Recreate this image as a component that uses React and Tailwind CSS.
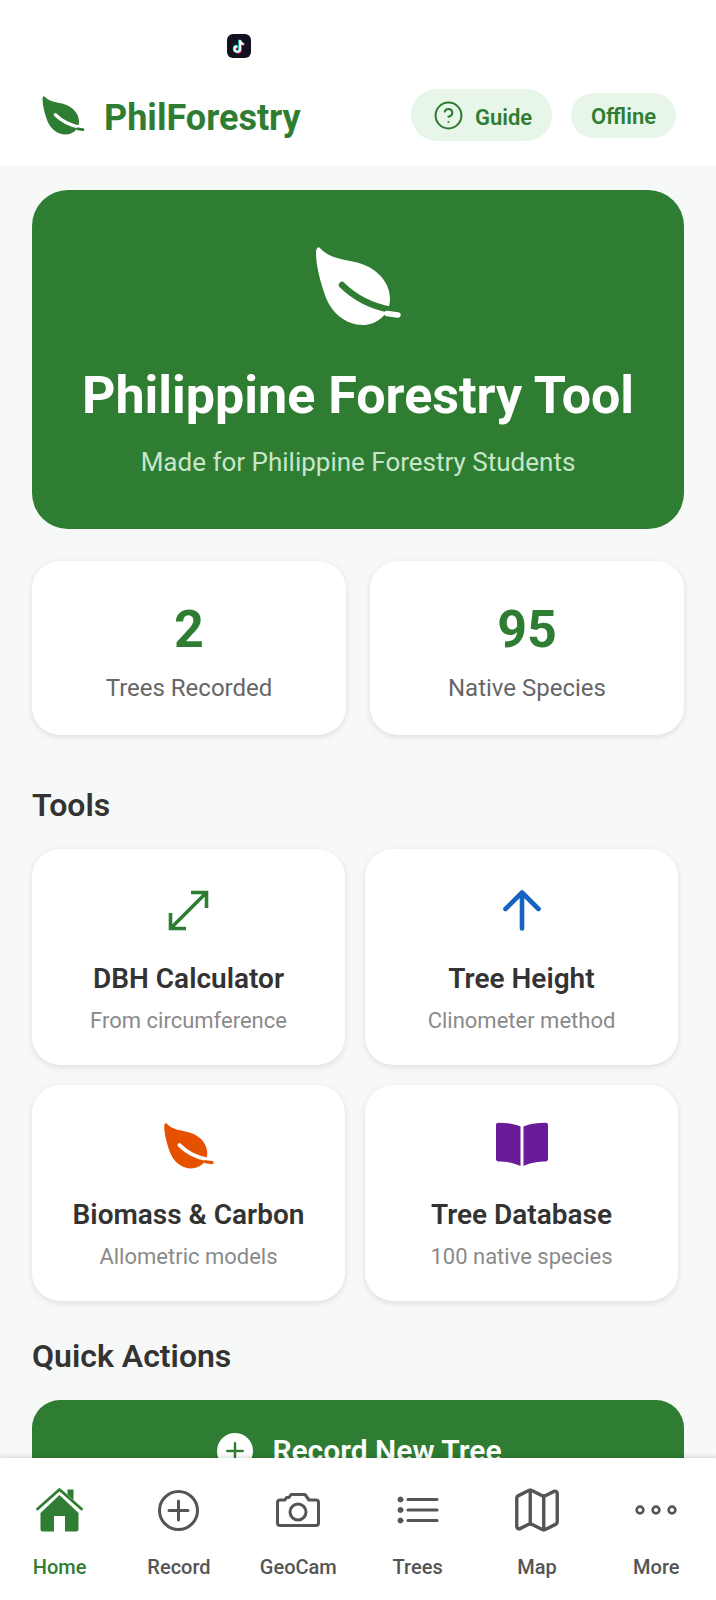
import React from "react";
import { CircleHelp, Map } from "lucide-react";

function Leaf({ className, fill, vein }) {
  return (
    <svg viewBox="0 0 85 79" className={className} aria-hidden="true">
      <path
        d="M4 1 C11 9 22 12 34 14 C56 17 74 32 74 52 C74 68 60 78 47 78 C30 78 15 66 9 48 C4 34 0 18 0 6 C0 2 1.5 -1 4 1 Z"
        fill={fill}
      />
      <path d="M26 38 C38 50 55 59 75 63" fill="none" stroke={vein} strokeWidth="6.5" strokeLinecap="round" />
      <path d="M71 66.5 L82 68" fill="none" stroke={fill} strokeWidth="5.5" strokeLinecap="round" />
    </svg>
  );
}

function TikTok() {
  const d = "M8.6 2v8.4a2.6 2.6 0 1 1-2.6-2.6M8.6 2.6c.4 2 1.6 3 3.4 3.2";
  return (
    <div className="flex h-6 w-6 items-center justify-center rounded-[6px] bg-[#11111f]">
      <svg viewBox="0 0 16 16" className="h-[17px] w-[17px]" fill="none" strokeWidth="2.2">
        <path d={d} stroke="#ff2d55" transform="translate(.6 .4)" />
        <path d={d} stroke="#25f4ee" transform="translate(-.6 -.4)" />
        <path d={d} stroke="#ffffff" strokeWidth="1.7" />
      </svg>
    </div>
  );
}

function Stat({ value, label }) {
  return (
    <div className="flex h-[174px] flex-1 flex-col items-center rounded-[28px] bg-white pt-[41px] shadow-[0_2px_6px_rgba(0,0,0,0.11)]">
      <div className="text-[52px] font-bold leading-[56px] text-[#2e7d32]">{value}</div>
      <div className="mt-[14px] text-[24px] leading-[32px] text-[#666666]">{label}</div>
    </div>
  );
}

function Tool({ icon, title, sub }) {
  return (
    <div className="flex h-[216px] flex-col items-center rounded-[28px] bg-white pt-[37px] shadow-[0_2px_6px_rgba(0,0,0,0.11)]">
      <div className="flex h-[48px] w-[60px] items-center justify-center">{icon}</div>
      <div className="mt-[27px] text-[28px] font-semibold leading-[36px] text-[#333333]">{title}</div>
      <div className="mt-[9px] text-[22px] leading-[30px] text-[#8a8a8a]">{sub}</div>
    </div>
  );
}

function NavItem({ icon, label, active }) {
  return (
    <div className="flex flex-1 flex-col items-center">
      <div className="flex h-[56px] items-center justify-center">{icon}</div>
      <div className={`mt-[15px] text-[20px] font-medium leading-[28px] ${active ? "text-[#2e7d32]" : "text-[#555555]"}`}>{label}</div>
    </div>
  );
}

export default function App() {
  return (
    <div className="flex h-[1600px] w-[716px] flex-col overflow-hidden bg-white font-['Roboto',sans-serif]">
      <header className="h-[166px] shrink-0 bg-white">
        <div className="h-[89px] pl-[227px] pt-[34px]">
          <TikTok />
        </div>
        <div className="flex items-center pl-[42px] pr-[40px]">
          <div className="flex h-[52px] items-center">
            <Leaf className="h-[39px] w-[43px]" fill="#2e7d32" vein="#ffffff" />
            <span className="ml-[19px] mt-[6px] text-[36px] font-bold leading-[44px] text-[#2e7d32]">PhilForestry</span>
          </div>
          <div className="ml-auto flex items-center gap-[19px]">
            <div className="flex h-[52px] w-[141px] items-center justify-center gap-[11px] rounded-full bg-[#e8f5e9] pl-[2px] text-[22px] font-semibold text-[#2e7d32]">
              <CircleHelp className="h-[31px] w-[31px]" strokeWidth={1.6} />
              <span className="mt-[4px]">Guide</span>
            </div>
            <div className="flex h-[45px] w-[105px] items-center justify-center rounded-full bg-[#e8f5e9] pt-[2px] text-[22px] font-semibold text-[#2e7d32]">
              Offline
            </div>
          </div>
        </div>
      </header>

      <main className="min-h-0 flex-1 overflow-hidden bg-[#f6f9f7] px-[32px] pt-[24px]">
        <section className="flex h-[339px] flex-col items-center rounded-[36px] bg-[#2e7d32] pt-[57px]">
          <Leaf className="h-[79px] w-[85px]" fill="#ffffff" vein="#2e7d32" />
          <h1 className="mt-[38px] text-[52px] font-bold leading-[64px] text-white">Philippine Forestry Tool</h1>
          <p className="mt-[17px] text-[26px] leading-[34px] text-[#c8e6c9]">Made for Philippine Forestry Students</p>
        </section>

        <section className="mt-[32px] flex gap-[24px]">
          <Stat value="2" label="Trees Recorded" />
          <Stat value="95" label="Native Species" />
        </section>

        <h2 className="mt-[50px] text-[32px] font-semibold leading-[40px] text-[#333333]">Tools</h2>

        <section className="mt-[24px] grid w-[646px] grid-cols-2 gap-x-[20px] gap-y-[20px]">
          <Tool
            title="DBH Calculator"
            sub="From circumference"
            icon={
              <svg viewBox="0 0 41 41" className="h-[41px] w-[41px]" fill="none" stroke="#2e7d32" strokeWidth="3.6" aria-hidden="true">
                <path d="M2.5 38.5 L38.5 2.5 M23 2.5 H38.5 V18 M2.5 23 V38.5 H18" />
              </svg>
            }
          />
          <Tool
            title="Tree Height"
            sub="Clinometer method"
            icon={
              <svg viewBox="0 0 38 41" className="h-[41px] w-[38px]" fill="none" stroke="#1565c0" strokeWidth="4.6" strokeLinecap="round" strokeLinejoin="round" aria-hidden="true">
                <path d="M19 38.5 V3 M2.5 19 L19 2.5 L35.5 19" />
              </svg>
            }
          />
          <Tool
            title="Biomass & Carbon"
            sub="Allometric models"
            icon={<Leaf className="h-[46px] w-[50px]" fill="#e65100" vein="#ffffff" />}
          />
          <Tool
            title="Tree Database"
            sub="100 native species"
            icon={
              <svg viewBox="0 0 52 44" className="mb-[4px] h-[44px] w-[52px]" fill="#6a1b9a" aria-hidden="true">
                <path d="M0 3 C0 1.5 1 .8 2.5 .8 C10 .8 17 1.5 24.5 4.5 V44 C17 40.5 9 39.5 2.5 39.5 C1 39.5 0 38.5 0 37 Z" />
                <path d="M52 3 C52 1.5 51 .8 49.5 .8 C42 .8 35 1.5 27.5 4.5 V44 C35 40.5 43 39.5 49.5 39.5 C51 39.5 52 38.5 52 37 Z" />
              </svg>
            }
          />
        </section>

        <h2 className="mt-[35px] text-[32px] font-semibold leading-[40px] text-[#333333]">Quick Actions</h2>

        <section className="mt-[24px] flex h-[112px] items-start justify-center gap-[19px] rounded-[28px] bg-[#2e7d32] pl-[3px] pt-[33px]">
          <span className="flex h-[36px] w-[36px] items-center justify-center rounded-full bg-white text-[#2e7d32]">
            <svg viewBox="0 0 20 20" className="h-[22px] w-[22px]" fill="none" stroke="currentColor" strokeWidth="2.2" strokeLinecap="round"><path d="M10 3v14M3 10h14" /></svg>
          </span>
          <span className="text-[30px] font-semibold leading-[36px] text-white">Record New Tree</span>
        </section>
      </main>

      <nav className="flex h-[142px] shrink-0 bg-white pt-[24px] shadow-[0_-2px_4px_rgba(0,0,0,0.12)]">
        <NavItem
          active
          label="Home"
          icon={
            <svg viewBox="0 0 47 44" className="h-[44px] w-[47px]" aria-hidden="true">
              <path d="M23.5 7 L4.5 25 V41 Q4.5 43.5 7 43.5 H18 V28 H29 V43.5 H40 Q42.5 43.5 42.5 41 V25 Z" fill="#2e7d32" />
              <path d="M1.5 21 L23.5 1.5 L45.5 21" fill="none" stroke="#2e7d32" strokeWidth="2.8" strokeLinecap="round" strokeLinejoin="round" />
              <path d="M31.5 1.5 H37.5 V12 L31.5 6.5 Z" fill="#2e7d32" />
            </svg>
          }
        />
        <NavItem
          label="Record"
          icon={
            <svg viewBox="0 0 41 41" className="h-[41px] w-[41px]" fill="none" stroke="#555555" strokeWidth="3" strokeLinecap="round" aria-hidden="true">
              <circle cx="20.5" cy="20.5" r="19" />
              <path d="M20.5 11 V30 M11 20.5 H30" />
            </svg>
          }
        />
        <NavItem
          label="GeoCam"
          icon={
            <svg viewBox="0 0 44 34" className="h-[34px] w-[44px]" fill="none" stroke="#555555" strokeWidth="3" strokeLinejoin="round" aria-hidden="true">
              <path d="M4 7 H9 L10.5 4.5 H13 L15 1.5 H29 L33 7 H40 Q42.5 7 42.5 9.5 V30 Q42.5 32.5 40 32.5 H4 Q1.5 32.5 1.5 30 V9.5 Q1.5 7 4 7 Z" />
              <circle cx="22" cy="19" r="8" />
            </svg>
          }
        />
        <NavItem
          label="Trees"
          icon={
            <svg viewBox="0 0 42 28" className="h-[28px] w-[42px]" fill="#555555" stroke="#555555" strokeLinecap="round" aria-hidden="true">
              <path d="M11 3.5 H40 M11 14 H40 M11 24.5 H40" fill="none" strokeWidth="3.2" />
              <circle cx="3.5" cy="3.5" r="2.5" strokeWidth="1" />
              <circle cx="3.5" cy="14" r="2.5" strokeWidth="1" />
              <circle cx="3.5" cy="24.5" r="2.5" strokeWidth="1" />
            </svg>
          }
        />
        <NavItem label="Map" icon={<Map className="h-[54px] w-[54px] text-[#555555]" strokeWidth={1.5} />} />
        <NavItem
          label="More"
          icon={
            <svg viewBox="0 0 42 10" className="h-[10px] w-[42px]" fill="none" stroke="#555555" strokeWidth="2.6" aria-hidden="true">
              <circle cx="5" cy="5" r="3.4" />
              <circle cx="21" cy="5" r="3.4" />
              <circle cx="37" cy="5" r="3.4" />
            </svg>
          }
        />
      </nav>
    </div>
  );
}
